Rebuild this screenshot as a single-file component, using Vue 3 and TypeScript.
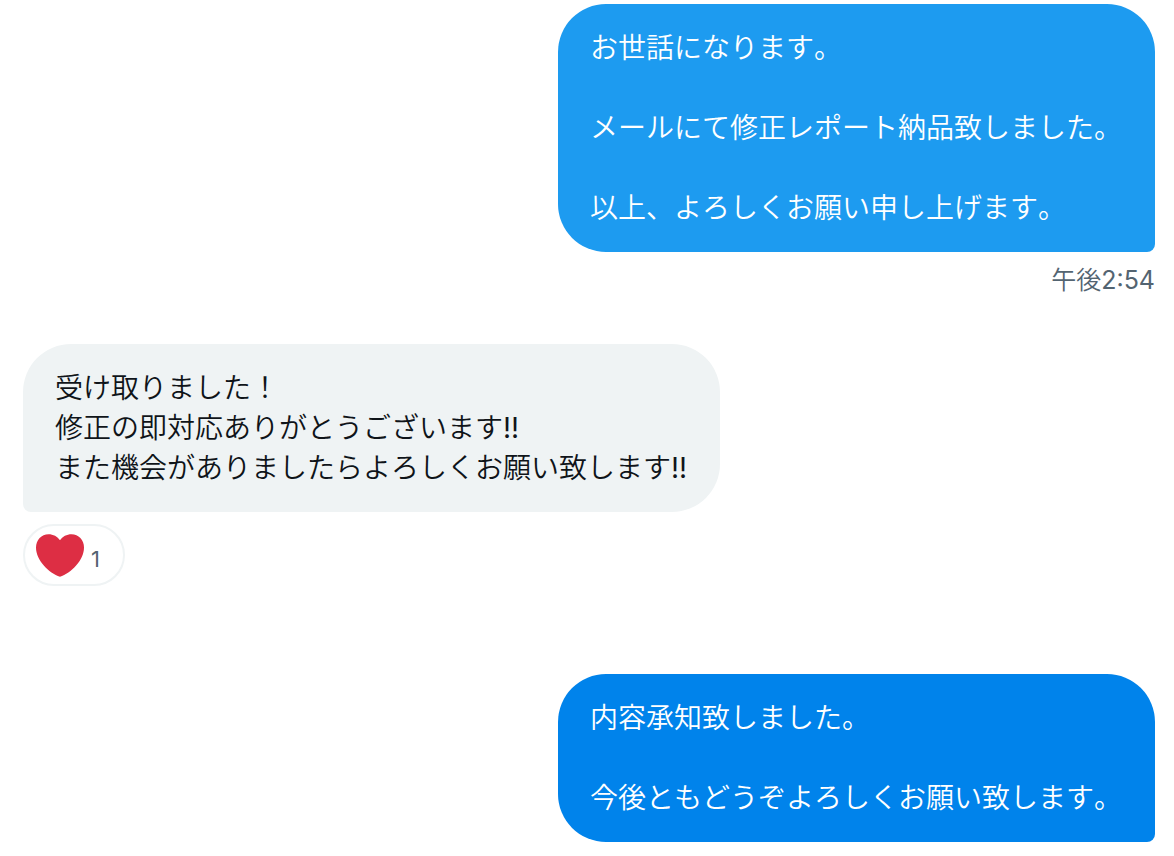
<script setup lang="ts">
interface Message {
  id: number
  side: 'sent' | 'received'
  tone: string
  text: string
  time?: string
  hearts?: number
}

const messages: Message[] = [
  {
    id: 1,
    side: 'sent',
    tone: 'light',
    text: 'お世話になります。\n\nメールにて修正レポート納品致しました。\n\n以上、よろしくお願い申し上げます。',
    time: '午後2:54',
  },
  {
    id: 2,
    side: 'received',
    tone: 'grey',
    text: '受け取りました！\n修正の即対応ありがとうございます!!\nまた機会がありましたらよろしくお願い致します!!',
    hearts: 1,
  },
  {
    id: 3,
    side: 'sent',
    tone: 'deep',
    text: '内容承知致しました。\n\n今後ともどうぞよろしくお願い致します。',
  },
]
</script>

<template>
  <main class="thread">
    <article v-for="m in messages" :key="m.id" class="message" :class="m.side">
      <p class="bubble" :class="m.tone">{{ m.text }}</p>
      <time v-if="m.time" class="time">{{ m.time }}</time>
      <button v-if="m.hearts" class="reaction" type="button">
        <svg class="heart" viewBox="0 0 48 44" aria-hidden="true">
          <path
            fill="#dd2e44"
            d="M48 14.500C48 7 42.500 1.200 35.500 1.200C30.800 1.200 26.500 3.500 24 7.200C21.500 3.500 17.200 1.200 12.500 1.200C5.500 1.200 0 7 0 14.500C0 27.500 13 40 24 43.800C35 40 48 27.500 48 14.500Z"
          />
        </svg>
        <span class="count">{{ m.hearts }}</span>
      </button>
    </article>
  </main>
</template>

<style>
body {
  margin: 0;
  background: #fff;
}
</style>

<style scoped>
.thread {
  display: flex;
  flex-direction: column;
  padding: 4px 19px 14px 23px;
  font-family: Inter, "Noto Sans CJK JP DemiLight", "Noto Sans CJK JP", sans-serif;
  font-weight: 400;
  font-kerning: none;
}

.message {
  display: flex;
  flex-direction: column;
  align-items: flex-start;
}

.sent {
  align-items: flex-end;
}

.received {
  margin: 48px 0 88px;
}

.bubble {
  margin: 0;
  padding: 24px 33px 24px 32px;
  border-radius: 48px 48px 48px 8px;
  font-size: 28px;
  line-height: 40px;
  white-space: pre-wrap;
}

.sent .bubble {
  border-radius: 48px 48px 8px 48px;
  color: #fff;
}

.bubble.light {
  background: #1d9bf0;
}

.bubble.deep {
  background: #0083eb;
}

.bubble.grey {
  background: #eff3f4;
  color: #0f1419;
}

.time {
  margin-top: 12px;
  color: #536471;
  font-size: 25px;
  line-height: 32px;
}

.reaction {
  display: flex;
  align-items: center;
  gap: 7px;
  box-sizing: border-box;
  height: 62px;
  margin-top: 12px;
  padding: 0 23px 0 11px;
  border: 2px solid #eff3f4;
  border-radius: 31px;
  background: #fff;
  color: #536471;
  font-family: inherit;
  font-size: 22px;
  font-weight: 400;
}

.heart {
  width: 48px;
  height: 44px;
}

.count {
  padding-top: 8px;
}
</style>
